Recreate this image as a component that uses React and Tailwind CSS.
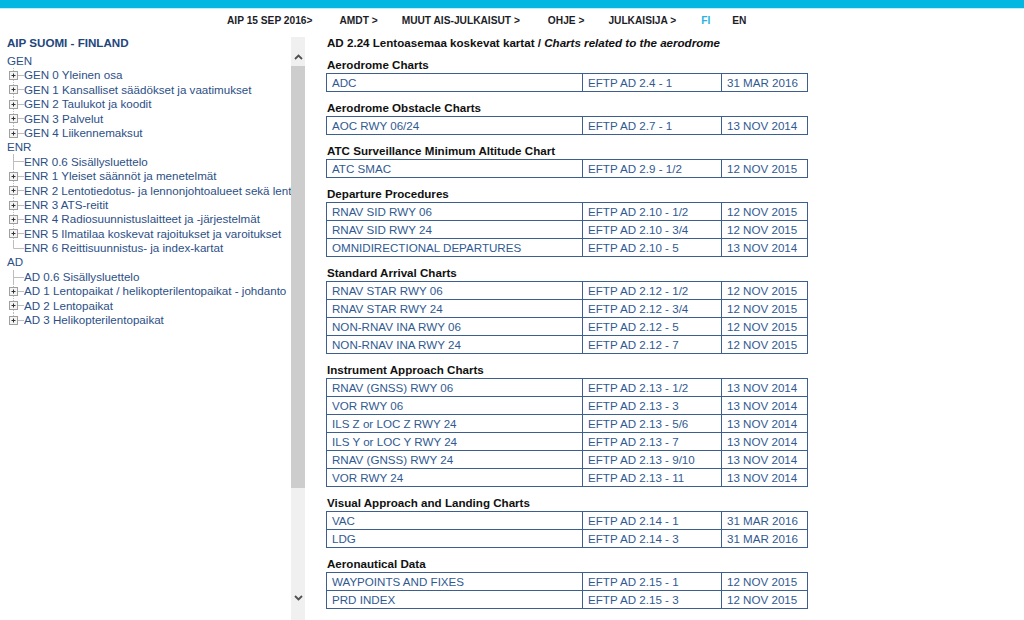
import React from "react";

const sections = [
  { title: "Aerodrome Charts", rows: [["ADC", "EFTP AD 2.4 - 1", "31 MAR 2016"]] },
  { title: "Aerodrome Obstacle Charts", rows: [["AOC RWY 06/24", "EFTP AD 2.7 - 1", "13 NOV 2014"]] },
  { title: "ATC Surveillance Minimum Altitude Chart", rows: [["ATC SMAC", "EFTP AD 2.9 - 1/2", "12 NOV 2015"]] },
  {
    title: "Departure Procedures",
    rows: [
      ["RNAV SID RWY 06", "EFTP AD 2.10 - 1/2", "12 NOV 2015"],
      ["RNAV SID RWY 24", "EFTP AD 2.10 - 3/4", "12 NOV 2015"],
      ["OMNIDIRECTIONAL DEPARTURES", "EFTP AD 2.10 - 5", "13 NOV 2014"],
    ],
  },
  {
    title: "Standard Arrival Charts",
    rows: [
      ["RNAV STAR RWY 06", "EFTP AD 2.12 - 1/2", "12 NOV 2015"],
      ["RNAV STAR RWY 24", "EFTP AD 2.12 - 3/4", "12 NOV 2015"],
      ["NON-RNAV INA RWY 06", "EFTP AD 2.12 - 5", "12 NOV 2015"],
      ["NON-RNAV INA RWY 24", "EFTP AD 2.12 - 7", "12 NOV 2015"],
    ],
  },
  {
    title: "Instrument Approach Charts",
    rows: [
      ["RNAV (GNSS) RWY 06", "EFTP AD 2.13 - 1/2", "13 NOV 2014"],
      ["VOR RWY 06", "EFTP AD 2.13 - 3", "13 NOV 2014"],
      ["ILS Z or LOC Z RWY 24", "EFTP AD 2.13 - 5/6", "13 NOV 2014"],
      ["ILS Y or LOC Y RWY 24", "EFTP AD 2.13 - 7", "13 NOV 2014"],
      ["RNAV (GNSS) RWY 24", "EFTP AD 2.13 - 9/10", "13 NOV 2014"],
      ["VOR RWY 24", "EFTP AD 2.13 - 11", "13 NOV 2014"],
    ],
  },
  {
    title: "Visual Approach and Landing Charts",
    rows: [
      ["VAC", "EFTP AD 2.14 - 1", "31 MAR 2016"],
      ["LDG", "EFTP AD 2.14 - 3", "31 MAR 2016"],
    ],
  },
  {
    title: "Aeronautical Data",
    rows: [
      ["WAYPOINTS AND FIXES", "EFTP AD 2.15 - 1", "12 NOV 2015"],
      ["PRD INDEX", "EFTP AD 2.15 - 3", "12 NOV 2015"],
    ],
  },
];

const tree = [
  {
    label: "GEN",
    items: [
      ["p", "GEN 0 Yleinen osa"],
      ["p", "GEN 1 Kansalliset säädökset ja vaatimukset"],
      ["p", "GEN 2 Taulukot ja koodit"],
      ["p", "GEN 3 Palvelut"],
      ["p", "GEN 4 Liikennemaksut"],
    ],
  },
  {
    label: "ENR",
    items: [
      ["l", "ENR 0.6 Sisällysluettelo"],
      ["p", "ENR 1 Yleiset säännöt ja menetelmät"],
      ["p", "ENR 2 Lentotiedotus- ja lennonjohtoalueet sekä lentoreitit"],
      ["p", "ENR 3 ATS-reitit"],
      ["p", "ENR 4 Radiosuunnistuslaitteet ja -järjestelmät"],
      ["p", "ENR 5 Ilmatilaa koskevat rajoitukset ja varoitukset"],
      ["l", "ENR 6 Reittisuunnistus- ja index-kartat"],
    ],
  },
  {
    label: "AD",
    items: [
      ["l", "AD 0.6 Sisällysluettelo"],
      ["p", "AD 1 Lentopaikat / helikopterilentopaikat - johdanto"],
      ["p", "AD 2 Lentopaikat"],
      ["p", "AD 3 Helikopterilentopaikat"],
    ],
  },
];

function TreeIcon({ plus, last }) {
  return (
    <svg width="17" height="15" viewBox="0 0 17 15" className="shrink-0">
      {plus ? (
        <>
          <line x1="6.5" y1="0" x2="6.5" y2="3" stroke="#bdbdbd" strokeWidth="1" strokeDasharray="1 1" />
          {!last && <line x1="6.5" y1="12" x2="6.5" y2="15" stroke="#bdbdbd" strokeWidth="1" strokeDasharray="1 1" />}
          <rect x="2.5" y="3.5" width="8" height="8" fill="#f4f4f4" stroke="#a0a0a0" strokeWidth="1" />
          <line x1="4.5" y1="7.5" x2="8.5" y2="7.5" stroke="#333" strokeWidth="1" />
          <line x1="6.5" y1="5.5" x2="6.5" y2="9.5" stroke="#333" strokeWidth="1" />
          <line x1="11" y1="7.5" x2="17" y2="7.5" stroke="#bdbdbd" strokeWidth="1" />
        </>
      ) : (
        <>
          <line x1="6.5" y1="0" x2="6.5" y2={last ? 7.5 : 15} stroke="#bdbdbd" strokeWidth="1" />
          <line x1="6.5" y1="7.5" x2="17" y2="7.5" stroke="#bdbdbd" strokeWidth="1" />
        </>
      )}
    </svg>
  );
}

function Chevron({ down }) {
  return (
    <svg width="9" height="6" viewBox="0 0 9 6">
      <polyline
        points={down ? "1,1 4.5,4.5 8,1" : "1,5 4.5,1.5 8,5"}
        fill="none"
        stroke="#505050"
        strokeWidth="1.8"
      />
    </svg>
  );
}

export default function App() {
  return (
    <div
      className="w-[1024px] h-[620px] overflow-hidden bg-white flex flex-col"
      style={{ fontFamily: '"Liberation Sans", Arial, sans-serif' }}
    >
      <div className="h-[9px] shrink-0 bg-[#02b8e3] border-b border-[#bdeef9]" />
      <div className="h-[24px] shrink-0 flex items-center pl-[227px] text-[10.2px] font-bold text-[#1d1d28] whitespace-nowrap">
        <span>AIP 15 SEP 2016&gt;</span>
        <span className="ml-[27px]">AMDT &gt;</span>
        <span className="ml-[24px]">MUUT AIS-JULKAISUT &gt;</span>
        <span className="ml-[28px]">OHJE &gt;</span>
        <span className="ml-[24px]">JULKAISIJA &gt;</span>
        <span className="ml-[25px] text-[#2ab3e0]">FI</span>
        <span className="ml-[22px]">EN</span>
      </div>
      <div className="flex flex-1 min-h-0">
        <div className="w-[305px] shrink-0 flex">
          <div className="w-[291px] overflow-hidden pl-[7px] pt-[2px]">
            <div className="text-[11.6px] leading-[16px] font-bold text-[#22467c] whitespace-nowrap">
              AIP SUOMI - FINLAND
            </div>
            <div className="mt-[3px] text-[11.6px] text-[#2c4f86]">
              {tree.map((g) => (
                <div key={g.label}>
                  <div className="h-[14.4px] leading-[14.4px] whitespace-nowrap">{g.label}</div>
                  {g.items.map(([kind, text], i) => (
                    <div key={text} className="h-[14.4px] flex items-center whitespace-nowrap">
                      <TreeIcon plus={kind === "p"} last={i === g.items.length - 1} />
                      <span className="leading-[14.4px]">{text}</span>
                    </div>
                  ))}
                </div>
              ))}
            </div>
          </div>
          <div className="w-[14px] mt-[4px] bg-[#f0f0f0] flex flex-col">
            <div className="h-[29px] flex justify-center pt-[17px]">
              <Chevron />
            </div>
            <div className="h-[422px] bg-[#cdcdcd]" />
            <div className="flex-1 flex items-end justify-center pb-[19px]">
              <Chevron down />
            </div>
          </div>
        </div>
        <div className="ml-[21px] pt-[2px] text-[11.6px]">
          <div className="leading-[16px] font-bold text-[#111] whitespace-nowrap pl-[1px]">
            AD 2.24 Lentoasemaa koskevat kartat / <span className="italic">Charts related to the aerodrome</span>
          </div>
          {sections.map((s, si) => (
            <div key={s.title} className={si === 0 ? "mt-[6px]" : "mt-[8px]"}>
              <div className="leading-[16px] font-bold text-[#111] pl-[1px] whitespace-nowrap">{s.title}</div>
              <div className="w-[482px] border border-[#3d5f8f]">
                {s.rows.map((r, ri) => (
                  <div
                    key={ri}
                    className={
                      ri > 0
                        ? "flex h-[18px] border-t border-[#3d5f8f] text-[#2f5a91] leading-[17px]"
                        : "flex h-[17px] text-[#2f5a91] leading-[17px]"
                    }
                  >
                    <div className="w-[255px] pl-[5px] whitespace-nowrap">{r[0]}</div>
                    <div className="w-[139px] pl-[5px] border-l border-[#3d5f8f] whitespace-nowrap">{r[1]}</div>
                    <div className="w-[86px] pl-[5px] border-l border-[#3d5f8f] whitespace-nowrap">{r[2]}</div>
                  </div>
                ))}
              </div>
            </div>
          ))}
        </div>
      </div>
    </div>
  );
}
